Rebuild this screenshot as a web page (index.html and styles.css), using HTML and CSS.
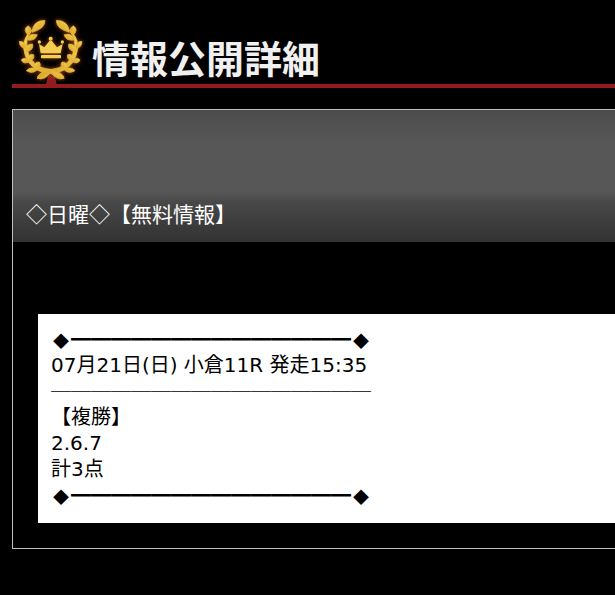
FILE: index.html
```html
<!DOCTYPE html>
<html lang="ja">
  <head>
    <meta charset="UTF-8" />
    <meta name="viewport" content="width=device-width, initial-scale=1" />
    <title>情報公開詳細</title>
    <link rel="stylesheet" href="styles.css">
  </head>
  <body>
    <header class="page-title">
      <svg class="emblem" viewBox="36 36 228 216" aria-hidden="true">
        <defs>
          <linearGradient id="gold" x1="0" y1="0" x2="1" y2="1">
            <stop offset="0" stop-color="#f6dc58" />
            <stop offset="0.5" stop-color="#e5b83c" />
            <stop offset="1" stop-color="#dba52b" />
          </linearGradient>
        </defs>
        <path fill="#931b20" d="M145 226h18l7 26h-32z" />
        <g class="laurel">
          <g id="branch">
            <path d="M100 86Q70 116 86 162Q101 203 151 208Q178 212 192 230L184 236Q168 222 148 220Q94 216 76 168Q58 116 100 86z" />
            <path d="M96 97Q98 62 135 61Q136 86 96 97z" />
            <path d="M86 106Q66 90 84 77Q102 88 86 106z" />
            <path d="M82 120Q86 98 112 104Q106 124 82 120z" />
            <path d="M78 146Q58 144 58 124Q78 124 78 146z" />
            <path d="M77 156Q76 130 98 132Q102 152 77 156z" />
            <path d="M90 184Q70 196 64 179Q78 168 90 184z" />
            <path d="M84 184Q84 158 101 164Q106 180 84 184z" />
            <path d="M114 208Q98 224 79 212Q90 198 114 208z" />
            <path d="M106 206Q100 184 118 186Q128 200 106 206z" />
            <path d="M152 214Q138 243 111 235Q122 217 152 214z" />
          </g>
          <use href="#branch" transform="matrix(-1 0 0 1 304 0)" />
        </g>
        <g class="crown">
          <path d="M122 160L117 132L133 142L149 122L155 122L171 142L188 132L182 160z" />
          <rect x="123" y="165" width="60" height="10" rx="2" />
          <circle cx="118" cy="126" r="5" />
          <circle cx="152" cy="116" r="6" />
          <circle cx="187" cy="126" r="5" />
        </g>
      </svg>
      <h1>情報公開詳細</h1>
    </header>

    <main class="panel">
      <h2 class="panel-title">◇日曜◇【無料情報】</h2>
      <div class="info">
        <p class="rule"><span class="diamond">◆</span>━━━━━━━━━━━━━━<span class="diamond">◆</span></p>
        <p>07月21日(日) 小倉11R 発走15:35</p>
        <p class="rule">────────────────</p>
        <p>【複勝】</p>
        <p>2.6.7</p>
        <p>計3点</p>
        <p class="rule"><span class="diamond">◆</span>━━━━━━━━━━━━━━<span class="diamond">◆</span></p>
      </div>
    </main>
  </body>
</html>
```

FILE: styles.css
```css
* {
  box-sizing: border-box;
}
body {
  margin: 0;
  padding: 12px 0 46px 12px;
  background: #000;
  color: #fff;
  font-family: "DejaVu Sans", "Noto Sans CJK JP", sans-serif;
}
h1,
h2,
p {
  margin: 0;
}
.page-title {
  display: flex;
  align-items: flex-end;
  gap: 4px;
  border-bottom: 4px solid #931b20;
}
.emblem {
  width: 76px;
  height: 72px;
}
.laurel {
  fill: url(#gold);
  stroke: #e5b83c;
  stroke-width: 2px;
  filter: drop-shadow(0 0 6px #a34a10);
}
.crown {
  fill: #f2cf50;
  filter: drop-shadow(0 0 6px #a34a10);
}
.page-title h1 {
  color: #f0f0f0;
  font-family: "Noto Sans CJK JP", sans-serif;
  font-size: 38px;
  line-height: 54px;
}
.panel {
  margin-top: 21px;
  padding-bottom: 25px;
  border: 1px solid #c0c0c0;
  border-right: none;
}
.panel-title {
  padding: 88px 13px 14px;
  background: linear-gradient(#4c4c4c, #575757 24%, #575757 62%, #484848 70%, #323232);
  font-family: "Noto Sans CJK JP", sans-serif;
  font-size: 21px;
  font-weight: 400;
  line-height: 30px;
}
.info {
  margin: 72px 0 0 25px;
  padding: 12px 13px 15px;
  background: #fff;
  color: #000;
  font-size: 20px;
  line-height: 26px;
}
.rule {
  font-family: "Noto Sans CJK JP", sans-serif;
  white-space: nowrap;
}
.diamond {
  display: inline-block;
  width: 20px;
  font-size: 16px;
  line-height: 16px;
  text-align: center;
}
```
